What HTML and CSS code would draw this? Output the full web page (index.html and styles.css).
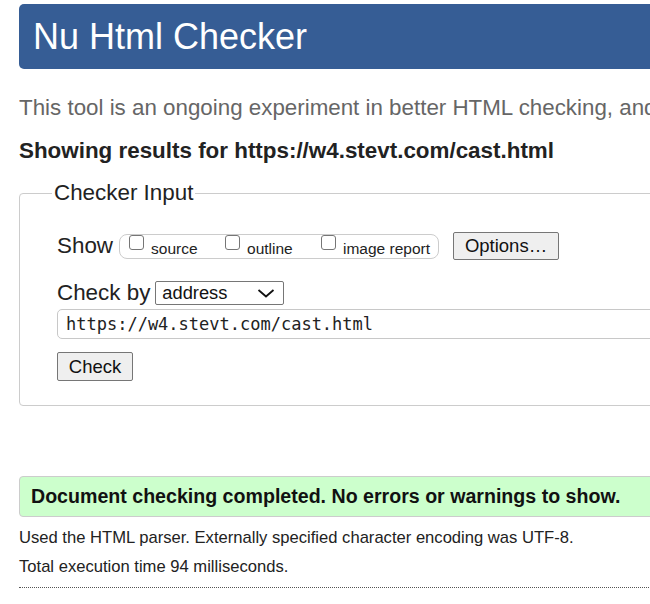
FILE: index.html
```html
<!DOCTYPE html>
<html>
<head>
<meta charset="utf-8">
<link rel="stylesheet" href="styles.css">
</head>
<body>
<div class="page">
  <h1 class="title">Nu Html Checker</h1>
  <p class="intro">This tool is an ongoing experiment in better HTML checking, and its behavior remains subject to change</p>
  <p class="showing">Showing results for https://w4.stevt.com/cast.html</p>
  <form class="form">
    <fieldset class="input-box">
      <legend class="legend">Checker Input</legend>
      <div class="row show-row">
        <span class="lbl">Show</span>
        <span class="opts">
          <label class="opt"><input class="cb" type="checkbox"><span class="opt-text">source</span></label>
          <label class="opt"><input class="cb" type="checkbox"><span class="opt-text">outline</span></label>
          <label class="opt"><input class="cb" type="checkbox"><span class="opt-text">image report</span></label>
        </span>
        <button type="button" class="btn options">Options…</button>
      </div>
      <div class="row by-row">
        <span class="lbl">Check by</span>
        <span class="select">address
          <svg class="chev" width="18" height="9" viewBox="0 0 18 9"><polyline points="1.5,1 9,7.5 16.5,1" fill="none" stroke="#111" stroke-width="1.8"/></svg>
        </span>
      </div>
      <div class="url">https://w4.stevt.com/cast.html</div>
      <button type="button" class="btn check">Check</button>
    </fieldset>
  </form>
  <p class="success">Document checking completed. No errors or warnings to show.</p>
  <p class="details">Used the HTML parser. Externally specified character encoding was UTF-8.</p>
  <p class="details">Total execution time 94 milliseconds.</p>
  <div class="dotted"></div>
</div>
</body>
</html>
```

FILE: styles.css
```css
html, body {
  margin: 0;
  padding: 0;
  overflow: hidden;
  background: #fff;
}
body {
  font-family: "Liberation Sans", Arial, sans-serif;
  color: #222;
}
.page {
  width: 760px;
  margin: 4px 0 0 19px;
}
.title {
  margin: 0;
  height: 65px;
  line-height: 65px;
  padding-left: 14px;
  background: #365d95;
  color: #fff;
  font-size: 36px;
  font-weight: normal;
  border-radius: 5px;
  white-space: nowrap;
}
.intro {
  margin: 25px 0 0;
  line-height: 28px;
  font-size: 22.35px;
  color: #666;
  white-space: nowrap;
  overflow: hidden;
}
.showing {
  margin: 16px 0 0;
  line-height: 26px;
  font-size: 22.4px;
  font-weight: bold;
  color: #222;
  white-space: nowrap;
}
.form {
  margin: 16px 0 0;
}
.input-box {
  margin: 0;
  border: 1px solid #ccc;
  border-radius: 4px;
  padding: 0 0 24px 37px;
  min-width: 0;
}
.legend {
  margin-left: -5px;
  padding: 0 2px;
  font-size: 22.4px;
  line-height: 26px;
  color: #222;
}
.row {
  display: flex;
  align-items: center;
}
.lbl {
  font-size: 22.4px;
  line-height: 26px;
  color: #222;
}
.show-row {
  margin-top: 26px;
  height: 28px;
}
.opts {
  margin-left: 6px;
  height: 25px;
  box-sizing: border-box;
  width: 320px;
  border: 1px solid #ccc;
  border-radius: 8px;
  display: flex;
  align-items: flex-start;
  padding-left: 9px;
}
.opt {
  display: flex;
  align-items: flex-start;
  width: 96px;
  flex: none;
}
.opt:last-child {
  width: auto;
}
.cb {
  appearance: none;
  -webkit-appearance: none;
  margin: 0;
  width: 15px;
  height: 15px;
  border: 1px solid #767676;
  border-radius: 3px;
  background: #fff;
  flex: none;
}
.opt-text {
  margin-left: 7px;
  margin-top: 5px;
  font-size: 15.5px;
  line-height: 17px;
  color: #222;
}
.btn {
  font-family: "Liberation Sans", Arial, sans-serif;
  background: #efefef;
  border: 1px solid #767676;
  border-radius: 2px;
  color: #111;
  box-sizing: border-box;
  padding: 0;
  margin: 0;
}
.options {
  margin-left: 14px;
  width: 106px;
  height: 28px;
  font-size: 18.5px;
}
.by-row {
  margin-top: 20px;
  height: 26px;
}
.select {
  margin-left: 5px;
  width: 129px;
  height: 24px;
  box-sizing: border-box;
  border: 1px solid #767676;
  border-radius: 2px;
  display: flex;
  align-items: center;
  justify-content: space-between;
  padding: 0 8px 0 6px;
  font-size: 18.3px;
  color: #111;
}
.chev {
  display: block;
}
.url {
  margin-top: 3px;
  height: 30px;
  box-sizing: border-box;
  border: 1px solid #c8c8c8;
  border-radius: 5px;
  padding-left: 8px;
  font-family: "DejaVu Sans Mono", "Liberation Mono", monospace;
  font-size: 17px;
  line-height: 28px;
  color: #222;
}
.check {
  display: block;
  margin-top: 13px;
  width: 76px;
  height: 29px;
  font-size: 18.5px;
}
.success {
  margin: 70px 0 0;
  height: 41px;
  box-sizing: border-box;
  background: #ccffcc;
  border: 1px solid #ccc;
  border-radius: 4px;
  padding-left: 11px;
  line-height: 39px;
  font-size: 19.6px;
  font-weight: bold;
  color: #111;
  white-space: nowrap;
}
.details {
  margin: 0;
  font-size: 16.6px;
  line-height: 29px;
  color: #222;
  white-space: nowrap;
}
.success + .details {
  margin-top: 6px;
}
.dotted {
  margin-top: 6px;
  border-top: 1px dotted #555;
}
```
